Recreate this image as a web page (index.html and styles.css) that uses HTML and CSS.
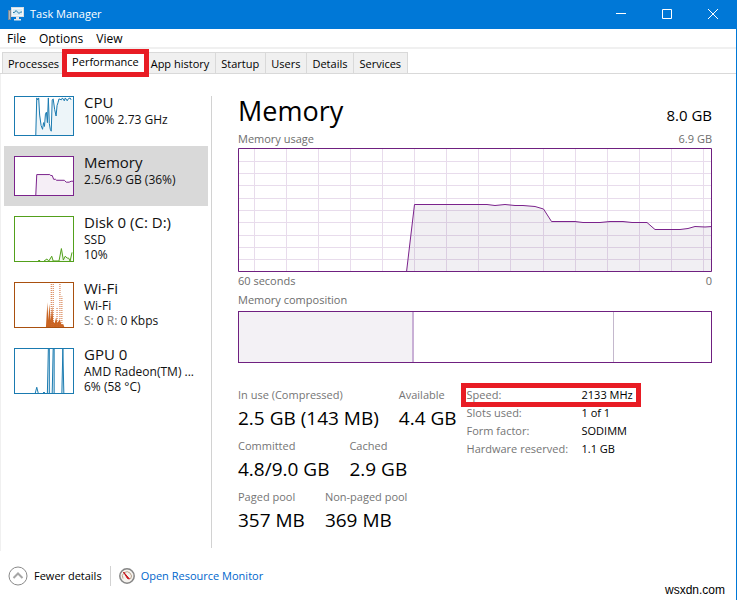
FILE: index.html
```html
<!DOCTYPE html>
<html lang="en">
<head>
<meta charset="utf-8">
<title>Task Manager</title>
<link rel="stylesheet" href="styles.css">
</head>
<body>
<header class="titlebar">
  <svg class="app-icon" viewBox="0 0 16 16" aria-hidden="true">
    <rect x="0.5" y="4.5" width="2" height="9" fill="#aeb8c0" stroke="#7d8b96"/>
    <rect x="3.5" y="1.5" width="12" height="9" fill="#f4f8fb" stroke="#d5dde3"/>
    <rect x="5" y="3" width="9" height="6" fill="#d7edf7"/>
    <path d="M5 6.500h1.500l1.500-2 3 3 1.500-1.500h1.500" fill="none" stroke="#267aa8"/>
    <path d="M8 11h3v2h2v1.500H6V13h2z" fill="#e3e8ec"/>
  </svg>
  <h1 class="window-title">Task Manager</h1>
  <button class="caption" aria-label="Minimize"><svg viewBox="0 0 10 10"><path d="M0 4.500h10"/></svg></button>
  <button class="caption" aria-label="Maximize"><svg viewBox="0 0 10 10"><path d="M.5 .5h9v9h-9z"/></svg></button>
  <button class="caption" aria-label="Close"><svg viewBox="0 0 10 10"><path d="M0 0l10 10M10 0L0 10"/></svg></button>
</header>
<div class="window">
  <nav class="menu">
    <button>File</button><button>Options</button><button>View</button>
  </nav>
  <nav class="tabs">
    <button class="tab">Processes</button>
    <button class="tab selected">Performance</button>
    <button class="tab">App history</button>
    <button class="tab">Startup</button>
    <button class="tab">Users</button>
    <button class="tab">Details</button>
    <button class="tab">Services</button>
  </nav>
  <div class="content">
    <aside class="sidebar">
      <button class="resource cpu">
        <svg class="thumb" viewBox="0 0 60 40" preserveAspectRatio="none" aria-hidden="true">
          <path class="area" d="M21 40L22 2 25 2 26 20 28 32 30 30 31 19 32 17 33 29 34 23 35 2 36 28 37 35 38 33 39 3 41 8 42 19 43 5 46 2 50 3 53 2 56 4 60 2V40z"/>
          <path class="line" d="M21.500 40L22.500 1 23.500 3 24.500 1 25.500 19 27 30 28.500 34 29.500 27 30.500 31 31.500 18 32.500 16 33.500 27 34.500 1 35.500 28 36.500 34 37.500 36 38.500 3 39.500 2 41 13 42.500 20 43.500 9 44.500 6 45.500 2 48 3 49 1 51 4 52 1 54 4 55 2 57 1 58 3"/>
        </svg>
        <span class="info"><span class="name">CPU</span><span>100% 2.73 GHz</span></span>
      </button>
      <button class="resource memory current">
        <svg class="thumb" viewBox="0 0 60 40" preserveAspectRatio="none" aria-hidden="true">
          <path class="area" d="M21.500 40L22.500 18.500H36L39 20 40 23.500 51 24.500 53 26.500 60 26V40z"/>
          <path class="line" d="M21.500 40L22.500 18.500H36L37 19.500H38.500L40 23.500H42L43 24.500H51L53 26.500H56L58 25.500H60"/>
        </svg>
        <span class="info"><span class="name">Memory</span><span>2.5/6.9 GB (36%)</span></span>
      </button>
      <button class="resource disk">
        <svg class="thumb tall" viewBox="0 0 60 46" preserveAspectRatio="none" aria-hidden="true">
          <path class="area" d="M30 46L33 43 35 45 38 41 40 45 46 45 48 32 50 45 52 40 55 43 57 45 59 36V46z"/>
          <path class="line" d="M24 45.500h2M30 46l3-2 2 2 3-5 1.500 5h6L48 33 50 45 52 41 54 43 55.500 43 57 46 59 37"/>
        </svg>
        <span class="info"><span class="name">Disk 0 (C: D:)</span><span>SSD</span><span>10%</span></span>
      </button>
      <button class="resource wifi">
        <svg class="thumb tall" viewBox="0 0 60 46" preserveAspectRatio="none" aria-hidden="true">
          <path class="solid" d="M32 46L33.500 20 34.500 39 35.500 22 37 39 38.500 24 39.500 40 41 42 42.500 36 44 42 46 38 48 43 50 43 51 46z"/>
          <path class="dots" d="M37.500 46V1M39.500 46V1M43.500 46V25M46.500 46V1M48.500 46V14"/>
        </svg>
        <span class="info"><span class="name">Wi-Fi</span><span>Wi-Fi</span><span><i>S:</i> 0 <i>R:</i> 0 Kbps</span></span>
      </button>
      <button class="resource gpu">
        <svg class="thumb tall" viewBox="0 0 60 46" preserveAspectRatio="none" aria-hidden="true">
          <path class="area" d="M33 46L35 1 37 46zM38 46L39 1H41V46zM48 46L49.500 1 51 46z"/>
          <path class="line" d="M21 46L22.500 40 24 46M33.500 46L34.500 0M35.500 0V46M38.500 46L39.500 0 40.500 0V46M48.500 46L49.500 0 50.500 46M29 45.500h2"/>
        </svg>
        <span class="info"><span class="name">GPU 0</span><span>AMD Radeon(TM) ...</span><span>6% (58 °C)</span></span>
      </button>
    </aside>
    <main class="detail">
      <div class="heading"><h2>Memory</h2><span>8.0 GB</span></div>
      <div class="caption-row"><span>Memory usage</span><span>6.9 GB</span></div>
      <svg class="usage" viewBox="0 0 474 124" preserveAspectRatio="none" role="img" aria-label="Memory usage">
        <path class="grid" d="M16.500 0V124M48.500 0V124M80.500 0V124M112.500 0V124M144.500 0V124M176.500 0V124M208.500 0V124M240.500 0V124M272.500 0V124M305.500 0V124M337.500 0V124M369.500 0V124M401.500 0V124M433.500 0V124M465.500 0V124M0 13.500H474M0 25.500H474M0 37.500H474M0 50.500H474M0 62.500H474M0 74.500H474M0 87.500H474M0 99.500H474M0 111.500H474"/>
        <path class="area" d="M168.500 124L176.500 56.500H249L257 57.500 267 56.500 292 58 305.500 61 313.500 73.500H337L345 74.500H362L372 73.500H385L394 74.500H409L417 81.500H442L450 80.500 457 78.500 474 78.500V124z"/>
        <path class="line" d="M168.500 124L176.500 56.500H249L257 57.500 267 56.500 277 57.500H285L297 58.500 305.500 61 313.500 73.500H337L345 74.500H362L372 73.500H385L394 74.500H409L417 81.500H442L450 80.500 457 78.500 467 79 474 78.500"/>
        <rect class="frame" x=".5" y=".5" width="473" height="123"/>
      </svg>
      <div class="caption-row axis"><span>60 seconds</span><span>0</span></div>
      <div class="caption-row composition-title"><span>Memory composition</span></div>
      <div class="composition"><span class="used"></span><span class="standby"></span><span class="free"></span></div>
      <div class="stats">
        <div class="figures">
          <dl><div><dt>In use (Compressed)</dt><dd>2.5 GB (143 MB)</dd></div><div><dt>Available</dt><dd>4.4 GB</dd></div></dl>
          <dl><div><dt>Committed</dt><dd>4.8/9.0 GB</dd></div><div><dt>Cached</dt><dd>2.9 GB</dd></div></dl>
          <dl><div><dt>Paged pool</dt><dd>357 MB</dd></div><div><dt>Non-paged pool</dt><dd>369 MB</dd></div></dl>
        </div>
        <dl class="specs">
          <div class="marked"><dt>Speed:</dt><dd>2133 MHz</dd></div>
          <div><dt>Slots used:</dt><dd>1 of 1</dd></div>
          <div><dt>Form factor:</dt><dd>SODIMM</dd></div>
          <div><dt>Hardware reserved:</dt><dd>1.1 GB</dd></div>
        </dl>
      </div>
    </main>
  </div>
  <footer class="footer">
    <button class="fewer">
      <svg viewBox="0 0 20 20" aria-hidden="true"><circle cx="10" cy="10" r="9" fill="none" stroke="#8a8a8a"/><path d="M5.500 12L10 7.500 14.500 12" fill="none" stroke="#a6a6a6" stroke-width="2"/></svg>
      <span>Fewer details</span>
    </button>
    <a class="monitor" href="#">
      <svg viewBox="0 0 16 16" aria-hidden="true"><circle cx="8" cy="8" r="7.200" fill="#f5f2ee" stroke="#858585" stroke-width="1.500"/><path d="M4 10.500A4.500 4.500 0 1 1 11.500 11" fill="none" stroke="#b9a48f"/><path d="M4.500 4L10.500 11 8.500 10.500z" fill="#c8141c" stroke="#c8141c"/></svg>
      <span>Open Resource Monitor</span>
    </a>
    <span class="site">wsxdn.com</span>
  </footer>
</div>
</body>
</html>
```
FILE: styles.css
```css
* { box-sizing: border-box; }

body {
  margin: 0;
  min-height: 100vh;
  display: flex;
  flex-direction: column;
  background: #fff;
  color: #000;
  font: 11px/17px "Open Sans", "Noto Sans", sans-serif;
}

button {
  margin: 0;
  padding: 0;
  border: 0;
  background: none;
  color: inherit;
  font: inherit;
  text-align: left;
  white-space: nowrap;
}

h1, h2, dl, dd { margin: 0; font-weight: 400; }

/* Title bar */
.titlebar {
  display: flex;
  align-items: center;
  height: 29px;
  padding: 0 1px 2px 8px;
  background: #0078d7;
  color: #fff;
}
.app-icon { width: 16px; height: 16px; }
.window-title { flex: 1; margin-left: 6px; font-size: 11px; }
.caption { display: flex; justify-content: center; width: 46px; }
.caption svg { width: 10px; height: 10px; overflow: visible; fill: none; stroke: #fff; }

.window {
  flex: 1;
  display: flex;
  flex-direction: column;
  border-right: 1px solid #0078d7;
}

/* Menu and tabs */
.menu {
  display: flex;
  gap: 13px;
  height: 20px;
  padding: 1px 7px 0;
  border-bottom: 2px solid #f0f0f0;
  font-size: 12px;
}
.tabs {
  display: flex;
  align-items: flex-end;
  height: 25px;
  padding-left: 2px;
  border-bottom: 1px solid #d9d9d9;
}
.tab {
  height: 21px;
  padding: 0 6px 0 5px;
  border: 1px solid #d9d9d9;
  border-width: 1px 1px 0 0;
  background: #f0f0f0;
}
.tab:first-child { border-left-width: 1px; }
.tab.selected {
  position: relative;
  z-index: 1;
  height: 24px;
  margin: 0 -3px 0 -4px;
  padding: 0 10px;
  border: 0;
  background: #fff;
}
.tab.selected::after {
  content: "";
  position: absolute;
  inset: 0 0 -4px;
  border: 5px solid #e81c24;
}

/* Resource list */
.content { flex: 1; display: flex; border-left: 1px solid #f0f0f0; }
.sidebar { width: 207px; padding: 12px 0 0 3px; }
.resource {
  display: flex;
  gap: 10px;
  width: 100%;
  height: 66px;
  padding: 7px 0 0 10px;
}
.cpu, .memory { height: 60px; }
.current { background: #d9d9d9; }
.thumb {
  flex: none;
  width: 60px;
  height: 40px;
  margin-top: 3px;
  border: 1px solid currentColor;
  background: #fff;
}
.thumb.tall { height: 46px; }
.thumb path { vector-effect: non-scaling-stroke; }
.info { display: flex; flex-direction: column; color: #111; font-size: 12px; line-height: 15px; }
.info .name { font-size: 15px; line-height: 19px; }
.info i { color: #777; font-style: normal; }
.cpu, .gpu { color: #1a7ab0; }
.memory { color: #7b238c; }
.disk { color: #52a01b; }
.wifi { color: #a9500f; }

.area { fill: currentColor; fill-opacity: 0.08; }
.line { fill: none; stroke: currentColor; }
.solid { fill: #c96422; }
.dots { fill: none; stroke: #d06a32; stroke-dasharray: 1 1; }

/* Detail pane */
.detail {
  flex: 1;
  margin: 22px 24px 3px 3px;
  padding-left: 26px;
  border-left: 1px solid #d2d2d2;
}
.heading { display: flex; justify-content: space-between; align-items: flex-end; height: 34px; }
.heading h2 { font-size: 27px; line-height: 30px; align-self: flex-start; }
.heading span { font-size: 15px; line-height: 30px; }
.caption-row { display: flex; justify-content: space-between; height: 18px; color: #6d6d6d; }
.axis { height: 19px; }
.composition-title { height: 20px; }
.usage { display: block; width: 100%; height: 124px; color: #7b238c; }
.usage path, .usage rect { vector-effect: non-scaling-stroke; }
.usage .area { fill: #3c1e50; fill-opacity: 0.07; }
.grid { stroke: #e8dcec; }
.frame { fill: none; stroke: #6f2080; }
.composition {
  display: grid;
  grid-template-columns: 175fr 200fr 97fr;
  height: 52px;
  border: 1px solid #6f2080;
}
.used { background: #f3f1f5; border-right: 2px solid #c9b0d6; }
.standby { border-right: 1px solid #c4b8cd; }

/* Figures */
.stats { display: flex; gap: 10px; padding-top: 23px; white-space: nowrap; }
.figures dl { display: flex; gap: 20px; height: 51px; }
dt { color: #757575; }
.figures dd { font-size: 19px; line-height: 30px; }
.specs div { position: relative; display: grid; grid-template-columns: 115px auto; line-height: 18px; }
.marked::after {
  content: "";
  position: absolute;
  inset: -3px -8px -3px -6px;
  border: 5px solid #e81c24;
}

/* Footer */
.footer { display: flex; align-items: center; height: 49px; padding: 0 11px 0 8px; }
.fewer, .monitor { display: flex; align-items: center; gap: 6px; }
.fewer { padding-right: 8px; border-right: 1px solid #d2d2d2; }
.fewer svg { width: 20px; height: 20px; }
.monitor { margin-left: 8px; color: #0066cc; text-decoration: none; }
.monitor svg { width: 16px; height: 16px; }
.site { margin-left: auto; align-self: flex-end; font: 12px/20px "Liberation Sans", sans-serif; }
```
